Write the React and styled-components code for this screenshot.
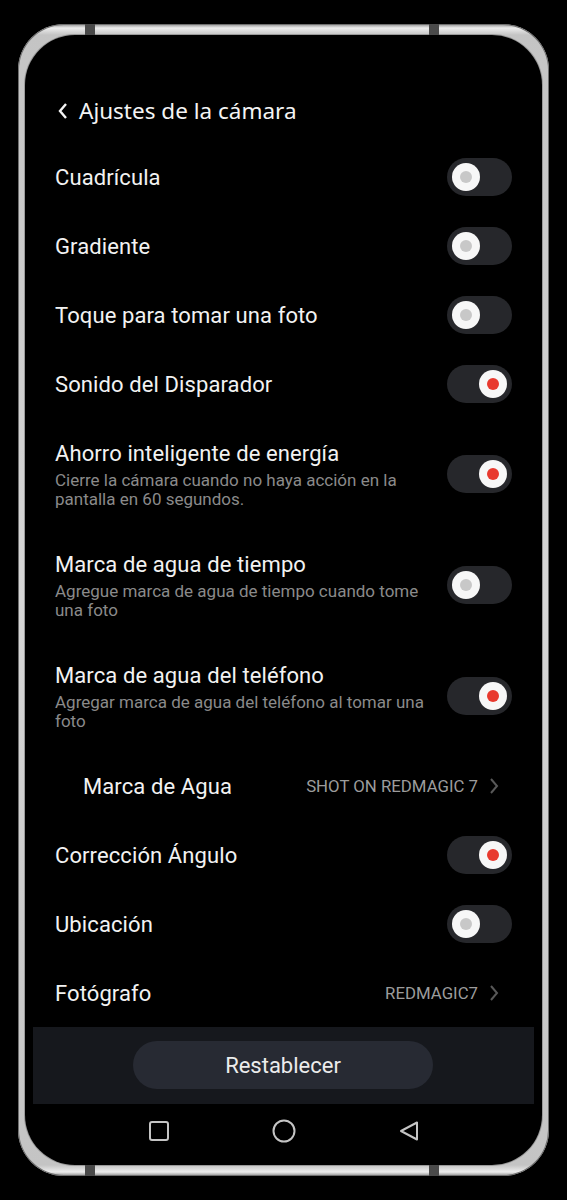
import React from "react";
import styled, { createGlobalStyle } from "styled-components";

const Global = createGlobalStyle`
  html, body { margin: 0; padding: 0; background: #000; }
  body { font-family: Roboto, "Liberation Sans", sans-serif; }
  * { box-sizing: border-box; }
`;

const Page = styled.div`
  width: 567px;
  height: 1200px;
  background: #000;
  padding: 24px 18px;
`;

const Frame = styled.div`
  position: relative;
  height: 1152px;
  border-radius: 46px;
  padding: 11px 7px;
  background: linear-gradient(
    180deg,
    #8c8c8c 0px,
    #ededed 4px,
    #c4c4c4 11px,
    #d6d6d6 50%,
    #c4c4c4 calc(100% - 11px),
    #ededed calc(100% - 4px),
    #8c8c8c 100%
  );
  box-shadow: inset 0 0 0 1px #6f6f6f;
`;

const Notch = styled.span`
  position: absolute;
  left: ${(p) => p.$x}px;
  ${(p) => (p.$bottom ? "bottom: 0;" : "top: 0;")}
  width: 10px;
  height: 11px;
  background: #4a4a4a;
`;

const Screen = styled.div`
  height: 100%;
  border-radius: 50px;
  background: #000;
  overflow: hidden;
  display: flex;
  flex-direction: column;
  box-shadow: 0 0 0 1px #9a9a9a;
`;

const Header = styled.div`
  display: flex;
  align-items: center;
  gap: 10px;
  height: 107px;
  padding: 62px 30px 17px 32px;
  color: #f4f4f4;
  font-family: "Noto Sans", "Open Sans", sans-serif;
  font-size: 22.5px;
  line-height: 28px;
`;

const List = styled.div`
  display: flex;
  flex-direction: column;
`;

const Row = styled.div`
  display: flex;
  align-items: center;
  gap: 14px;
  height: ${(p) => (p.$tall ? 111 : 69)}px;
  padding: 0 30px 0 ${(p) => (p.$indent ? 58 : 30)}px;
`;

const TextBlock = styled.div`
  flex: 1;
  min-width: 0;
  padding-top: 1px;
`;

const Title = styled.div`
  color: #f2f2f2;
  font-size: 22px;
  line-height: 27px;
  letter-spacing: 0.1px;
`;

const Sub = styled.div`
  margin-top: 4px;
  color: #8a8a8a;
  font-size: 17px;
  line-height: 19px;
`;

const Track = styled.div`
  flex: none;
  width: 65px;
  height: 38px;
  border-radius: 19px;
  background: #26272b;
  display: flex;
  align-items: center;
  justify-content: ${(p) => (p.$on ? "flex-end" : "flex-start")};
  padding: 0 5px;
`;

const Knob = styled.div`
  width: 28px;
  height: 28px;
  border-radius: 50%;
  background: #f7f7f7;
  display: flex;
  align-items: center;
  justify-content: center;
  &::after {
    content: "";
    width: 12px;
    height: 12px;
    border-radius: 50%;
    background: ${(p) => (p.$on ? "#e8392e" : "#c8c8c8")};
  }
`;

const Value = styled.div`
  display: flex;
  align-items: center;
  gap: 11px;
  color: #9c9c9c;
  font-size: 16.8px;
  margin-right: 13px;
`;

const BottomBar = styled.div`
  margin: 0 8px;
  height: 78px;
  background: #16181d;
  display: flex;
  align-items: center;
  justify-content: center;
`;

const ResetButton = styled.button`
  width: 300px;
  height: 48px;
  border: none;
  border-radius: 24px;
  background: #272a33;
  color: #ececec;
  font-family: Roboto, sans-serif;
  font-size: 22px;
  margin-right: 1px;
`;

const Nav = styled.div`
  height: 62px;
  display: flex;
  align-items: center;
  justify-content: center;
  gap: 85px;
  padding-bottom: 6px;
`;

const NavIcon = styled.div`
  width: 40px;
  display: flex;
  justify-content: center;
`;

const Toggle = ({ on }) => (
  <Track $on={on}>
    <Knob $on={on} />
  </Track>
);

const Chevron = () => (
  <svg width="10" height="18" viewBox="0 0 10 18">
    <polyline points="2,2 8,9 2,16" fill="none" stroke="#585858" strokeWidth="2" />
  </svg>
);

const items = [
  { t: "Cuadrícula", on: false },
  { t: "Gradiente", on: false },
  { t: "Toque para tomar una foto", on: false },
  { t: "Sonido del Disparador", on: true },
  {
    t: "Ahorro inteligente de energía",
    s: "Cierre la cámara cuando no haya acción en la pantalla en 60 segundos.",
    on: true,
  },
  {
    t: "Marca de agua de tiempo",
    s: "Agregue marca de agua de tiempo cuando tome una foto",
    on: false,
  },
  {
    t: "Marca de agua del teléfono",
    s: "Agregar marca de agua del teléfono al tomar una foto",
    on: true,
  },
  { t: "Marca de Agua", v: "SHOT ON REDMAGIC 7", indent: true },
  { t: "Corrección Ángulo", on: true },
  { t: "Ubicación", on: false },
  { t: "Fotógrafo", v: "REDMAGIC7" },
];

export default function App() {
  return (
    <Page>
      <Global />
      <Frame>
        <Notch $x={67} />
        <Notch $x={411} />
        <Notch $x={67} $bottom />
        <Notch $x={411} $bottom />
        <Screen>
          <Header>
            <svg width="12" height="20" viewBox="0 0 12 20">
              <polyline points="9,3 3,10 9,17" fill="none" stroke="#f4f4f4" strokeWidth="2.4" />
            </svg>
            <span>Ajustes de la cámara</span>
          </Header>
          <List>
            {items.map((it) => (
              <Row key={it.t} $tall={!!it.s} $indent={it.indent}>
                <TextBlock>
                  <Title>{it.t}</Title>
                  {it.s && <Sub>{it.s}</Sub>}
                </TextBlock>
                {it.v ? (
                  <Value>
                    {it.v}
                    <Chevron />
                  </Value>
                ) : (
                  <Toggle on={it.on} />
                )}
              </Row>
            ))}
          </List>
          <BottomBar>
            <ResetButton>Restablecer</ResetButton>
          </BottomBar>
          <Nav>
            <NavIcon>
              <svg width="22" height="22" viewBox="0 0 22 22">
                <rect x="2" y="2" width="18" height="18" rx="2" fill="none" stroke="#c4c4c4" strokeWidth="2" />
              </svg>
            </NavIcon>
            <NavIcon>
              <svg width="24" height="24" viewBox="0 0 24 24">
                <circle cx="12" cy="12" r="10.5" fill="none" stroke="#c4c4c4" strokeWidth="2" />
              </svg>
            </NavIcon>
            <NavIcon>
              <svg width="22" height="22" viewBox="0 0 22 22">
                <path d="M19 2.5 L19 19.5 L3 11 Z" fill="none" stroke="#c4c4c4" strokeWidth="2" strokeLinejoin="round" />
              </svg>
            </NavIcon>
          </Nav>
        </Screen>
      </Frame>
    </Page>
  );
}
